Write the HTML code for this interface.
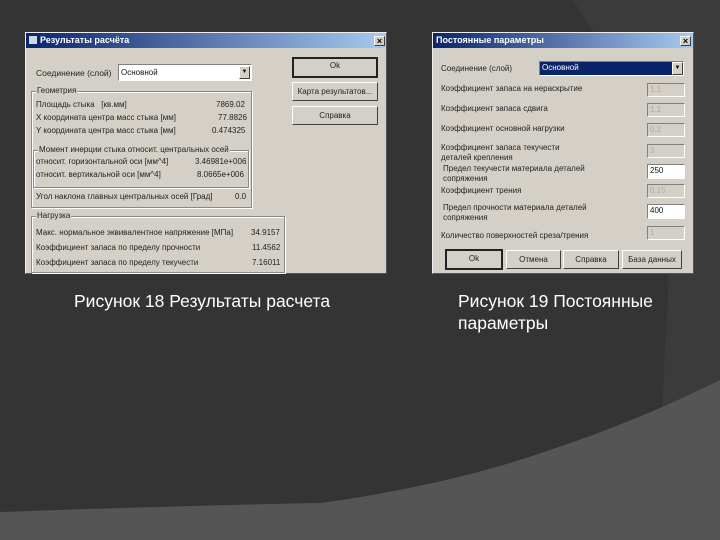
<!DOCTYPE html>
<html><head><meta charset="utf-8"><style>
*{margin:0;padding:0;box-sizing:border-box}
body{width:720px;height:540px;overflow:hidden;background:#343434;position:relative;font-family:"Liberation Sans","DejaVu Sans",sans-serif}
.a{position:absolute;white-space:nowrap}
.dlg{position:absolute;background:#d4d0c8;border:1px solid #eee;border-right-color:#555;border-bottom-color:#555}
.tb{position:absolute;left:0;right:0;top:0;height:15px;background:linear-gradient(90deg,#0a246a,#a6caf0);color:#fff;font-weight:bold;font-size:9px;line-height:15px;padding-left:3px}
.x{position:absolute;width:11px;height:10px;background:#d4d0c8;border:1px solid;border-color:#fff #404040 #404040 #fff;font-size:9px;line-height:8px;text-align:center;color:#000;font-weight:bold}
.t{position:absolute;white-space:nowrap;font-size:8px;color:#222;line-height:10px}
.grp{position:absolute;border:1px solid #888;box-shadow:1px 1px 0 #fff, inset 1px 1px 0 #fff}
.btn{position:absolute;background:#d4d0c8;border:1px solid;border-color:#fff #404040 #404040 #fff;font-size:8px;color:#222;text-align:center}
.in{position:absolute;border:1px solid;border-color:#808080 #fff #fff #808080;background:#d4d0c8;font-size:8px;color:#aaa;padding-left:2px;line-height:12px}
.in.w{background:#fff;color:#111}
.cap{position:absolute;color:#fff;font-size:17.5px;line-height:22px;white-space:nowrap}
</style></head><body>
<svg class="a" style="left:0;top:0" width="720" height="540">
<path d="M573 0 Q600 40 640 120 Q672 200 668 300 Q664 360 662 420 L720 380 L720 0Z" fill="#3b3b3b"/>
<path d="M0 512 Q200 505 321 503 Q450 485 550 450 Q640 420 720 380 L720 540 L0 540Z" fill="#555"/>
</svg>

<!-- Dialog 1 -->
<div class="dlg" style="left:25px;top:32px;width:362px;height:242px">
 <div class="tb"><span style="display:inline-block;width:8px;height:8px;background:#cfd8e8;vertical-align:-1px;margin-right:3px"></span>Результаты расчёта</div>
 <div class="x" style="left:348px;top:3px">×</div>
 <div class="t" style="left:10px;top:35px;font-size:8.5px">Соединение (слой)</div>
 <div class="in w" style="left:92px;top:31px;width:134px;height:17px;line-height:15px">Основной<span style="position:absolute;right:1px;top:1px;width:11px;height:13px;background:#d4d0c8;border:1px solid;border-color:#fff #404040 #404040 #fff;font-size:6px;text-align:center;line-height:11px">▼</span></div>
 <div class="btn" style="left:266px;top:24px;width:86px;height:21px;border:2px solid #222;line-height:13px">Ok</div>
 <div class="btn" style="left:266px;top:49px;width:86px;height:19px;line-height:17px">Карта результатов...</div>
 <div class="btn" style="left:266px;top:73px;width:86px;height:19px;line-height:17px">Справка</div>
 <div class="grp" style="left:5px;top:58px;width:221px;height:117px"></div>
 <div class="t" style="left:10px;top:53px;background:#d4d0c8;padding:0 1px">Геометрия</div>
 <div class="t" style="left:10px;top:67px">Площадь стыка &nbsp; [кв.мм]</div><div class="t" style="left:190px;top:67px">7869.02</div>
 <div class="t" style="left:10px;top:80px">X координата центра масс стыка [мм]</div><div class="t" style="left:192px;top:80px">77.8826</div>
 <div class="t" style="left:10px;top:93px">Y координата центра масс стыка [мм]</div><div class="t" style="left:186px;top:93px">0.474325</div>
 <div class="grp" style="left:7px;top:117px;width:216px;height:38px"></div>
 <div class="t" style="left:12px;top:112px;background:#d4d0c8;padding:0 1px">Момент инерции стыка относит. центральных осей</div>
 <div class="t" style="left:10px;top:124px">относит. горизонтальной оси [мм^4]</div><div class="t" style="left:169px;top:124px">3.46981e+006</div>
 <div class="t" style="left:10px;top:137px">относит. вертикальной оси [мм^4]</div><div class="t" style="left:171px;top:137px">8.0665e+006</div>
 <div class="t" style="left:10px;top:159px">Угол наклона главных центральных осей [Град]</div><div class="t" style="left:209px;top:159px">0.0</div>
 <div class="grp" style="left:5px;top:183px;width:254px;height:57px"></div>
 <div class="t" style="left:10px;top:178px;background:#d4d0c8;padding:0 1px">Нагрузка</div>
 <div class="t" style="left:10px;top:195px">Макс. нормальное эквивалентное напряжение [МПа]</div><div class="t" style="left:225px;top:195px">34.9157</div>
 <div class="t" style="left:10px;top:210px">Коэффициент запаса по пределу прочности</div><div class="t" style="left:226px;top:210px">11.4562</div>
 <div class="t" style="left:10px;top:225px">Коэффициент запаса по пределу текучести</div><div class="t" style="left:226px;top:225px">7.16011</div>
</div>

<!-- Dialog 2 -->
<div class="dlg" style="left:432px;top:32px;width:262px;height:242px">
 <div class="tb">Постоянные параметры</div>
 <div class="x" style="left:247px;top:3px">×</div>
 <div class="t" style="left:8px;top:31px">Соединение (слой)</div>
 <div class="in" style="left:106px;top:28px;width:145px;height:15px;background:#0a246a;color:#fff;line-height:12px;border-color:#808080 #fff #fff #808080">Основной<span style="position:absolute;right:0;top:0;width:11px;height:13px;background:#d4d0c8;border:1px solid;border-color:#fff #404040 #404040 #fff;font-size:6px;text-align:center;line-height:11px;color:#000">▼</span></div>
 <div class="t" style="left:8px;top:51px">Коэффициент запаса на нераскрытие</div><div class="in" style="left:214px;top:50px;width:38px;height:14px">1.1</div>
 <div class="t" style="left:8px;top:71px">Коэффициент запаса сдвига</div><div class="in" style="left:214px;top:70px;width:38px;height:14px">1.1</div>
 <div class="t" style="left:8px;top:91px">Коэффициент основной нагрузки</div><div class="in" style="left:214px;top:90px;width:38px;height:14px">0.2</div>
 <div class="t" style="left:8px;top:110px">Коэффициент запаса текучести<br>деталей крепления</div><div class="in" style="left:214px;top:111px;width:38px;height:14px">3</div>
 <div class="t" style="left:10px;top:131px">Предел текучести материала деталей<br>сопряжения</div><div class="in w" style="left:214px;top:131px;width:38px;height:15px">250</div>
 <div class="t" style="left:8px;top:153px">Коэффициент трения</div><div class="in" style="left:214px;top:151px;width:38px;height:14px">0.15</div>
 <div class="t" style="left:10px;top:170px">Предел прочности материала деталей<br>сопряжения</div><div class="in w" style="left:214px;top:171px;width:38px;height:15px">400</div>
 <div class="t" style="left:8px;top:198px">Количество поверхностей среза/трения</div><div class="in" style="left:214px;top:193px;width:38px;height:14px">1</div>
 <div class="btn" style="left:12px;top:216px;width:58px;height:21px;border:2px solid #222;line-height:16px">Ok</div>
 <div class="btn" style="left:73px;top:217px;width:55px;height:19px;line-height:17px">Отмена</div>
 <div class="btn" style="left:130px;top:217px;width:56px;height:19px;line-height:17px">Справка</div>
 <div class="btn" style="left:189px;top:217px;width:60px;height:19px;line-height:17px">База данных</div>
</div>

<div class="cap" style="left:74px;top:290px">Рисунок 18 Результаты расчета</div>
<div class="cap" style="left:458px;top:290px">Рисунок 19 Постоянные<br>параметры</div>
</body></html>
